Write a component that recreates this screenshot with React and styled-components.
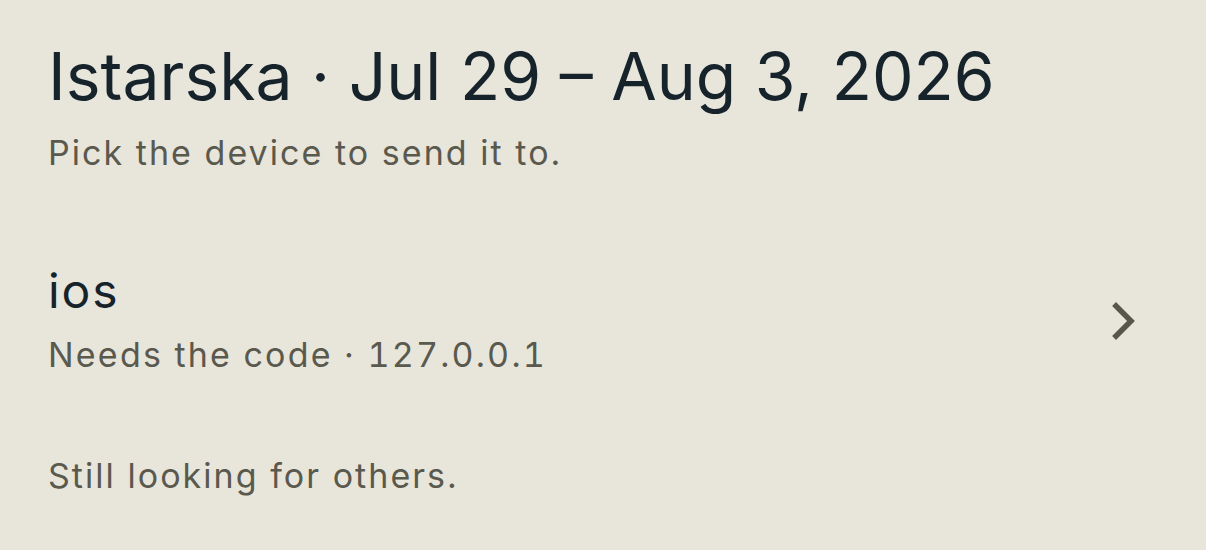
import React from "react";
import styled, { createGlobalStyle } from "styled-components";

const Global = createGlobalStyle`
  html, body { margin: 0; padding: 0; background: #e8e5db; }
  body { font-family: Inter, "Noto Sans", sans-serif; -webkit-font-smoothing: antialiased; }
`;

const Page = styled.main`
  box-sizing: border-box;
  width: 1206px;
  height: 550px;
  padding: 34px 48px 0 48px;
  display: flex;
  flex-direction: column;
`;

const Title = styled.h1`
  margin: 0;
  font-size: 66px;
  font-weight: 400;
  line-height: 84px;
  color: #16232b;
  letter-spacing: 0;
`;

const Subtitle = styled.p`
  margin: 13px 0 0 0;
  font-size: 34px;
  line-height: 44px;
  color: #5a594e;
  letter-spacing: 0.06em;
`;

const DeviceRow = styled.button`
  all: unset;
  margin-top: 90px;
  display: flex;
  align-items: center;
  justify-content: space-between;
  cursor: pointer;
  padding-right: 19px;
`;

const DeviceText = styled.div`
  display: flex;
  flex-direction: column;
  gap: 16px;
`;

const DeviceName = styled.div`
  font-size: 48px;
  line-height: 52px;
  color: #16232b;
  letter-spacing: 0.04em;
`;

const Meta = styled.div`
  font-size: 34px;
  line-height: 44px;
  color: #5a594e;
  letter-spacing: 0.065em;
  font-variant-numeric: tabular-nums;
`;

const Footer = styled.p`
  margin: 77px 0 0 0;
  font-size: 34px;
  line-height: 44px;
  color: #5a594e;
  letter-spacing: 0.06em;
`;

const Chevron = () => (
  <svg width="30" height="40" viewBox="0 0 30 40" fill="none">
    <path d="M7 5 L22 20 L7 35" stroke="#57564b" strokeWidth="5.5" strokeLinecap="square" strokeLinejoin="miter" />
  </svg>
);

export default function App() {
  return (
    <>
      <Global />
      <Page>
        <Title>Istarska · Jul 29 – Aug 3, 2026</Title>
        <Subtitle>Pick the device to send it to.</Subtitle>
        <DeviceRow>
          <DeviceText>
            <DeviceName>ios</DeviceName>
            <Meta>Needs the code · 127.0.0.1</Meta>
          </DeviceText>
          <Chevron />
        </DeviceRow>
        <Footer>Still looking for others.</Footer>
      </Page>
    </>
  );
}
